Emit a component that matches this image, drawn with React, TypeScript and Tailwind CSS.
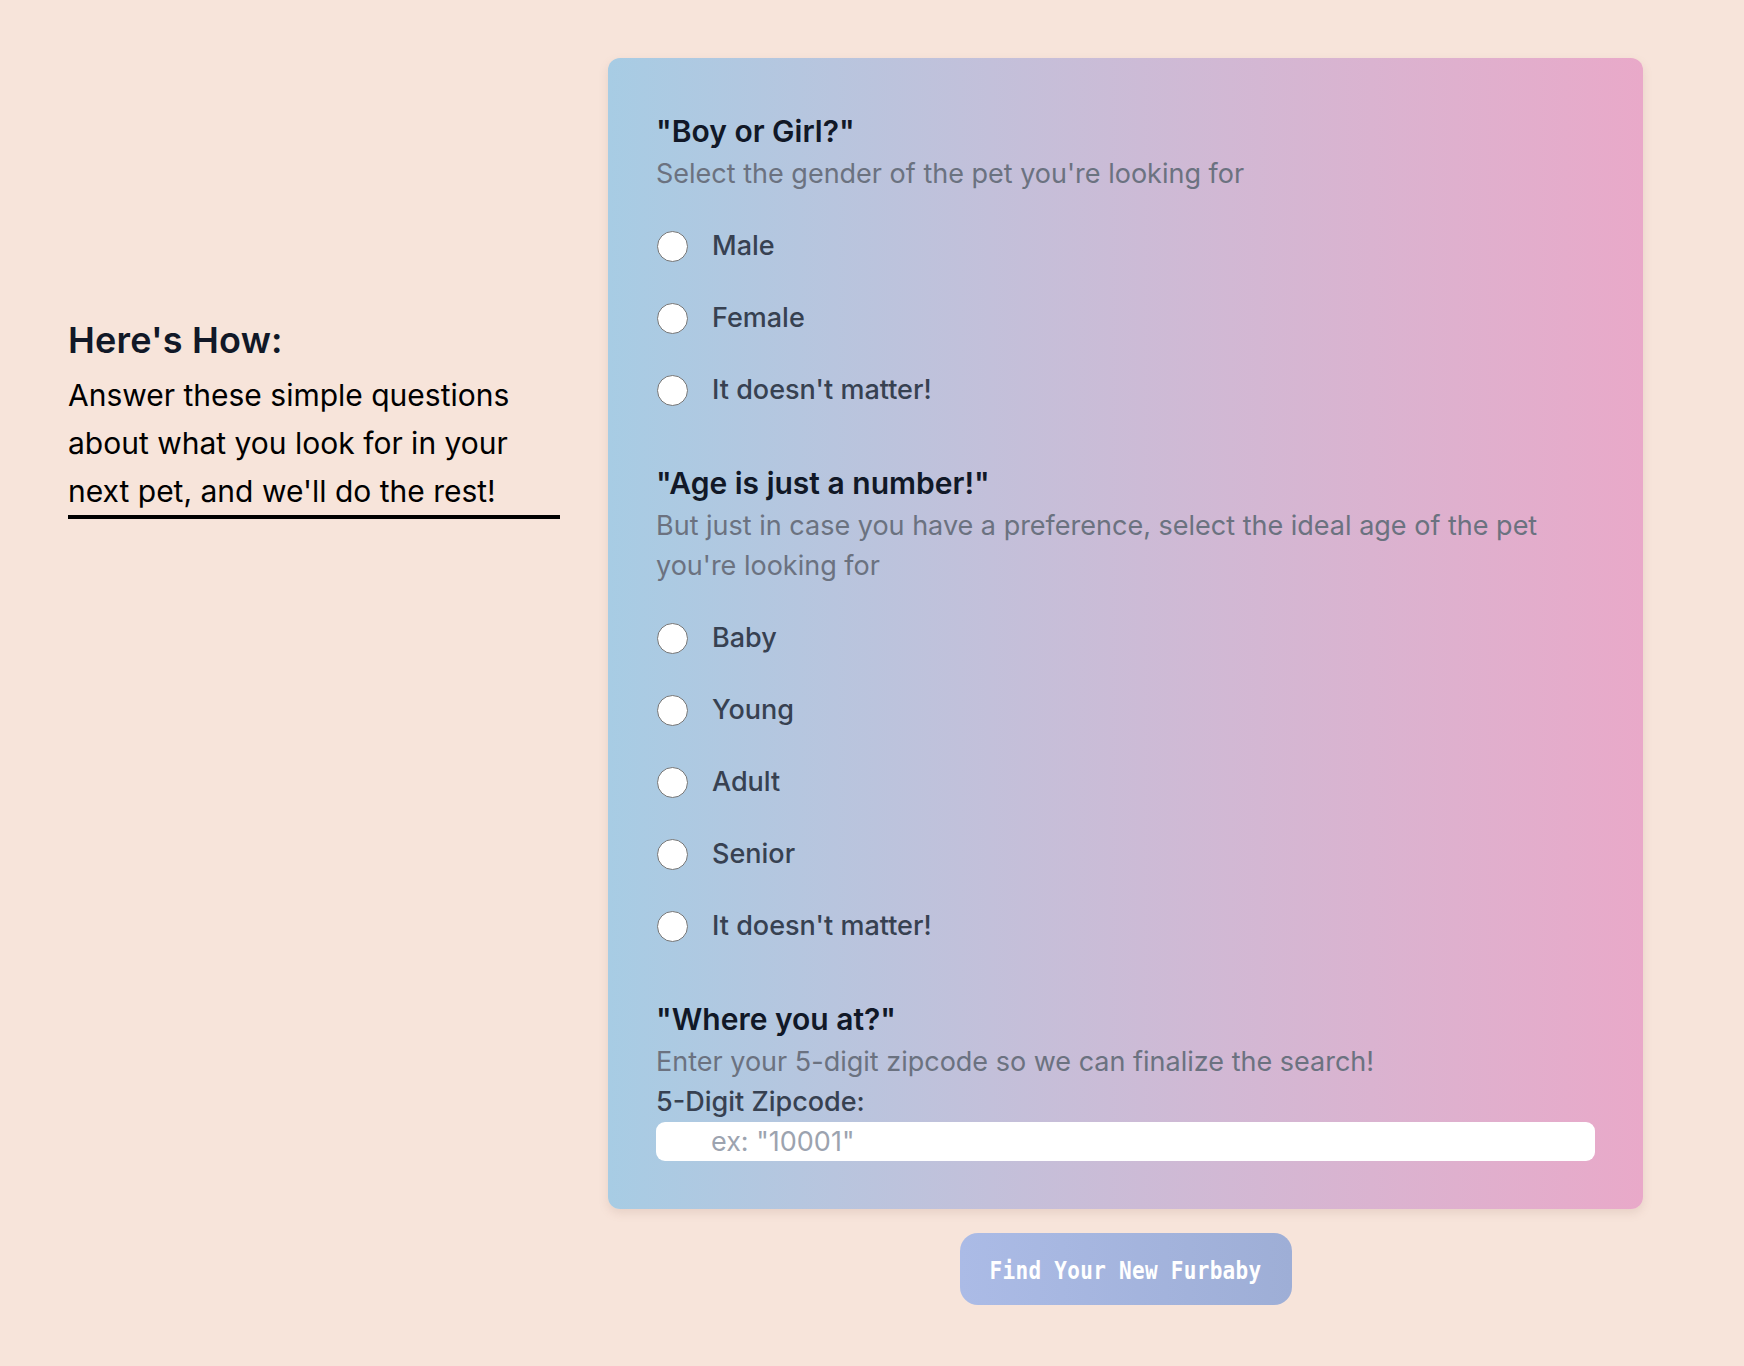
import React from "react";

const genderOptions = ["Male", "Female", "It doesn't matter!"];
const ageOptions = ["Baby", "Young", "Adult", "Senior", "It doesn't matter!"];

function RadioRow({ name, label }: { name: string; label: string }) {
  return (
    <label className="flex items-center h-[36px] cursor-pointer">
      <input
        type="radio"
        name={name}
        value={label}
        className="appearance-none m-0 ml-[1px] w-[31px] h-[31px] shrink-0 rounded-full border-[1.5px] border-[#767676] bg-white"
      />
      <span className="ml-[24px] text-[27px] leading-[36px] font-medium text-[#374151]">
        {label}
      </span>
    </label>
  );
}

function Question({
  title,
  subtitle,
  className,
  children,
}: {
  title: string;
  subtitle: React.ReactNode;
  className?: string;
  children: React.ReactNode;
}) {
  return (
    <div className={className}>
      <h3 className="text-[30px] leading-[36px] font-semibold text-[#111827]">{title}</h3>
      <p className="mt-[5px] text-[27px] leading-[40px] text-[#6b7280]">{subtitle}</p>
      {children}
    </div>
  );
}

export default function App() {
  return (
    <div className="min-h-screen bg-[#f7e4da] font-['Inter','Noto_Sans',sans-serif] pl-[68px] pt-[58px] pb-[60px]">
      <div className="flex gap-[48px] items-start">
        {/* left intro */}
        <div className="w-[492px] mt-[262px] shrink-0">
          <h2 className="text-[36px] leading-[40px] font-semibold text-[#111827] tracking-[0.2px]">
            Here's How:
          </h2>
          <p className="mt-[11px] text-[30px] leading-[48px] text-black border-b-4 border-black">
            Answer these simple questions about what you look for in your next pet, and we'll do the
            rest!
          </p>
        </div>

        {/* form */}
        <div className="w-[1035px] shrink-0 flex flex-col items-center">
          <form className="w-full rounded-[12px] bg-gradient-to-r from-[#a7cce4] to-[#e9a9c9] shadow-[0_4px_10px_rgba(160,120,110,0.18)] px-[48px] pt-[55px] pb-[48px]">
            <Question title={'"Boy or Girl?"'} subtitle="Select the gender of the pet you're looking for">
              <div className="mt-[34px] flex flex-col gap-[36px]">
                {genderOptions.map((o) => (
                  <RadioRow key={o} name="gender" label={o} />
                ))}
              </div>
            </Question>

            <Question
              className="mt-[57px]"
              title={'"Age is just a number!"'}
              subtitle={
                <>
                  But just in case you have a preference, select the ideal age of the pet you're
                  looking for
                </>
              }
            >
              <div className="mt-[34px] flex flex-col gap-[36px]">
                {ageOptions.map((o) => (
                  <RadioRow key={o} name="age" label={o} />
                ))}
              </div>
            </Question>

            <Question
              className="mt-[57px]"
              title={'"Where you at?"'}
              subtitle="Enter your 5-digit zipcode so we can finalize the search!"
            >
              <label htmlFor="zip" className="block text-[27px] leading-[40px] font-medium text-[#374151]">
                5-Digit Zipcode:
              </label>
              <input
                id="zip"
                type="text"
                placeholder={'ex: "10001"'}
                className="block w-full h-[39px] rounded-[9px] bg-white pl-[55px] pt-[2px] text-[27px] text-[#374151] placeholder:text-[#9ca3af] outline-none border-0"
              />
            </Question>
          </form>

          <button
            type="button"
            className="mt-[24px] w-[332px] h-[72px] pt-[6px] rounded-[18px] bg-gradient-to-r from-[#abbbe6] to-[#9eaed6] text-white text-[21px] font-bold font-['DejaVu_Sans_Mono',monospace]"
          >
            <span className="inline-block scale-y-[1.2] tracking-[0.3px]">Find Your New Furbaby</span>
          </button>
        </div>
      </div>
    </div>
  );
}
